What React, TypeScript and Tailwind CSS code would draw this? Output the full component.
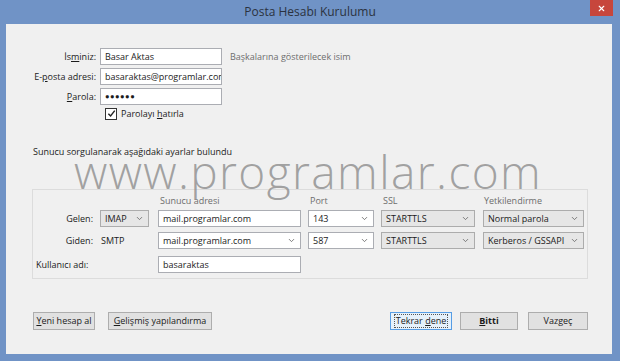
import { ChevronDown, X } from "lucide-react";
import type { ReactNode } from "react";

const font = { fontFamily: '"Open Sans", "Noto Sans", sans-serif' };

function U({ children }: { children: ReactNode }) {
  return <span className="underline underline-offset-1">{children}</span>;
}

function TextBox({ value, className = "" }: { value: string; className?: string }) {
  return (
    <div
      className={`flex h-[17px] items-center overflow-hidden whitespace-nowrap border border-[#abadb3] bg-white pl-[4px] text-[#1b1b1b] ${className}`}
    >
      {value}
    </div>
  );
}

function Combo({ value, editable, className = "" }: { value: string; editable?: boolean; className?: string }) {
  return (
    <div
      className={`flex h-[17px] items-center justify-between border pl-[4px] pr-[4px] text-[#1b1b1b] ${
        editable ? "border-[#abadb3] bg-white" : "border-[#acacac] bg-[#e6e6e6]"
      } ${className}`}
    >
      <span className="whitespace-nowrap">{value}</span>
      <ChevronDown className="h-[9px] w-[9px] text-[#666]" strokeWidth={2.2} />
    </div>
  );
}

function Button({ children, className = "", focused }: { children: ReactNode; className?: string; focused?: boolean }) {
  return (
    <div
      className={`flex h-[18px] items-center justify-center whitespace-nowrap border text-[#1b1b1b] ${
        focused ? "border-[#569de5] bg-[#e5f1fb]" : "border-[#adadad] bg-[#e1e1e1]"
      } ${className}`}
    >
      <span className={focused ? "px-[1px] leading-[12px] outline-1 outline-dotted outline-[#555]" : ""}>
        {children}
      </span>
    </div>
  );
}

export default function App() {
  return (
    <div className="flex h-[361px] w-[620px] flex-col bg-[#7093c6]" style={font}>
      <div className="relative flex h-[24px] shrink-0 items-center justify-center">
        <span className="text-[12px] text-[#2b3240]">Posta Hesabı Kurulumu</span>
        <div className="absolute right-[7px] top-0 flex h-[16px] w-[23px] items-center justify-center bg-[#c7463c]">
          <X className="h-[9px] w-[9px] text-white" strokeWidth={3} />
        </div>
      </div>

      <div className="relative mb-[7px] ml-[6px] mr-[8px] flex flex-1 flex-col bg-[#f0f0f0] text-[9px] text-[#1b1b1b]">
        {/* account fields */}
        <div className="mt-[24px] flex flex-col gap-[3px]">
          <div className="flex items-center">
            <span className="w-[90px] text-right">
              İs<U>m</U>iniz:
            </span>
            <TextBox value="Basar Aktas" className="ml-[4px] w-[122px]" />
            <span className="ml-[8px] text-[#6d6d6d]">Başkalarına gösterilecek isim</span>
          </div>
          <div className="flex items-center">
            <span className="w-[90px] text-right">
              E-<U>p</U>osta adresi:
            </span>
            <TextBox value="basaraktas@programlar.com" className="ml-[4px] w-[122px]" />
          </div>
          <div className="flex items-center">
            <span className="w-[90px] text-right">
              <U>P</U>arola:
            </span>
            <TextBox value="●●●●●●" className="ml-[4px] w-[122px] text-[7.5px] tracking-[0.5px]" />
          </div>
          <div className="ml-[99px] mt-[-1px] flex items-center gap-[4px]">
            <div className="flex h-[12px] w-[12px] items-center justify-center border border-[#333] bg-white">
              <svg viewBox="0 0 10 10" className="h-[9px] w-[9px]" fill="none" stroke="#222" strokeWidth={1.6}>
                <path d="M1.5 5.2 L4 7.8 L8.6 1.8" />
              </svg>
            </div>
            <span>
              Parolayı <U>h</U>atırla
            </span>
          </div>
        </div>

        <p className="ml-[27px] mt-[24px]">Sunucu sorgulanarak aşağıdaki ayarlar bulundu</p>

        {/* server settings group */}
        <div className="ml-[26px] mt-[31px] flex h-[90px] w-[556px] flex-col border border-[#dcdcdc]">
          <div className="mt-[4px] flex h-[14px] items-center text-[#6d6d6d]">
            <span className="ml-[127px] w-[150px]">Sunucu adresi</span>
            <span className="w-[73px]">Port</span>
            <span className="w-[101px]">SSL</span>
            <span>Yetkilendirme</span>
          </div>
          <div className="mt-[2px] flex items-center">
            <span className="w-[60px] text-right">Gelen:</span>
            <Combo value="IMAP" className="ml-[7px] w-[49px]" />
            <TextBox value="mail.programlar.com" className="ml-[9px] w-[143px]" />
            <Combo value="143" editable className="ml-[7px] w-[66px]" />
            <Combo value="STARTTLS" className="ml-[7px] w-[94px]" />
            <Combo value="Normal parola" className="ml-[8px] w-[101px]" />
          </div>
          <div className="mt-[5px] flex items-center">
            <span className="w-[60px] text-right">Giden:</span>
            <span className="ml-[7px] w-[49px] pl-[1px]">SMTP</span>
            <Combo value="mail.programlar.com" editable className="ml-[9px] w-[143px]" />
            <Combo value="587" editable className="ml-[7px] w-[66px]" />
            <Combo value="STARTTLS" className="ml-[7px] w-[94px]" />
            <Combo value="Kerberos / GSSAPI" className="ml-[8px] w-[101px]" />
          </div>
          <div className="mt-[7px] flex items-center">
            <span className="ml-[3px] w-[122px]">Kullanıcı adı:</span>
            <TextBox value="basaraktas" className="w-[143px]" />
          </div>
        </div>

        {/* buttons */}
        <div className="mb-[24px] mt-auto flex items-center">
          <Button className="ml-[27px] w-[62px]">
            <U>Y</U>eni hesap al
          </Button>
          <Button className="ml-[13px] w-[104px]">
            <U>G</U>elişmiş yapılandırma
          </Button>
          <Button focused className="ml-[178px] w-[62px]">
            Tekrar <U>d</U>ene
          </Button>
          <Button className="ml-[8px] w-[58px] font-bold">
            <U>B</U>itti
          </Button>
          <Button className="ml-[10px] w-[60px]">Vazgeç</Button>
        </div>

        {/* watermark */}
        <div className="pointer-events-none absolute left-[68px] top-[124px] text-[46px] font-light leading-none tracking-[1.4px] text-[#8c8c8c]/80">
          www.programlar.com
        </div>
      </div>
    </div>
  );
}
